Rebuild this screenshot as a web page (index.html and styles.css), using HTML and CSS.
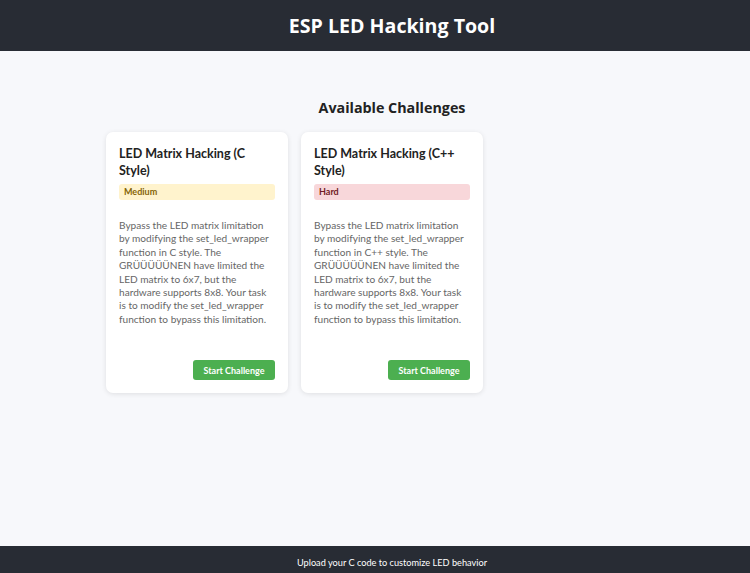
FILE: index.html
```html
<!DOCTYPE html>
<html>
<head>
<meta charset="utf-8">
<link rel="stylesheet" href="styles.css">
</head>
<body>
<div class="page">
  <header class="header">
    <h1 class="title">ESP LED Hacking Tool</h1>
  </header>
  <main class="main">
    <h2 class="section-title">Available Challenges</h2>
    <div class="grid">
      <div class="card">
        <h3 class="card-title">LED Matrix Hacking (C Style)</h3>
        <div class="badge badge-medium">Medium</div>
        <p class="desc">Bypass the LED matrix limitation by modifying the set_led_wrapper function in C style. The GRÜÜÜÜÜNEN have limited the LED matrix to 6x7, but the hardware supports 8x8. Your task is to modify the set_led_wrapper function to bypass this limitation.</p>
        <div class="actions"><button class="btn">Start Challenge</button></div>
      </div>
      <div class="card">
        <h3 class="card-title">LED Matrix Hacking (C++ Style)</h3>
        <div class="badge badge-hard">Hard</div>
        <p class="desc">Bypass the LED matrix limitation by modifying the set_led_wrapper function in C++ style. The GRÜÜÜÜÜNEN have limited the LED matrix to 6x7, but the hardware supports 8x8. Your task is to modify the set_led_wrapper function to bypass this limitation.</p>
        <div class="actions"><button class="btn">Start Challenge</button></div>
      </div>
    </div>
  </main>
  <footer class="footer">Upload your C code to customize LED behavior</footer>
</div>
</body>
</html>
```
FILE: styles.css
```css
html, body {
  margin: 0;
  padding: 0;
}
body {
  font-family: "Open Sans", "Noto Sans", sans-serif;
  background: #f7f8fb;
  color: #222;
}
.page {
  display: flex;
  flex-direction: column;
  height: 573px;
}
.header {
  background: #282c34;
  height: 51px;
  display: flex;
  align-items: center;
  justify-content: center;
  padding-left: 34px;
}
.title {
  margin: 0;
  color: #fff;
  font-size: 19.6px;
  font-weight: 700;
}
.main {
  flex: 1;
  padding: 46px 0 0 106px;
}
.section-title {
  width: 572px;
  margin: 0 0 13px 0;
  text-align: center;
  font-size: 14.3px;
  font-weight: 700;
  color: #222;
  line-height: 22px;
}
.grid {
  width: 572px;
  display: grid;
  grid-template-columns: repeat(3, 182px);
  column-gap: 13px;
}
.card {
  background: #fff;
  border-radius: 7px;
  box-shadow: 0 1px 5px rgba(0,0,0,0.1);
  padding: 14px 13px 13px 13px;
  height: 261px;
  box-sizing: border-box;
  display: flex;
  flex-direction: column;
  font-family: "Lato", "Open Sans", sans-serif;
}
.card-title {
  margin: 0 0 5px 0;
  font-size: 12.5px;
  line-height: 16.5px;
  font-weight: 700;
  color: #222;
}
.badge {
  height: 16px;
  line-height: 16px;
  font-size: 9px;
  font-weight: 700;
  padding: 0 5px;
  border-radius: 3px;
}
.badge-medium {
  background: #fff3cd;
  color: #856404;
}
.badge-hard {
  background: #f8d7da;
  color: #721c24;
}
.desc {
  margin: 19px 0 0 0;
  font-size: 10.1px;
  line-height: 13.4px;
  color: #666;
  flex: 1;
}
.actions {
  display: flex;
  justify-content: flex-end;
}
.btn {
  background: #4caf50;
  color: #fff;
  border: none;
  border-radius: 3px;
  font-family: inherit;
  font-size: 9px;
  font-weight: 700;
  height: 20px;
  width: 82px;
  padding: 0;
}
.footer {
  background: #282c34;
  color: #fff;
  height: 27px;
  box-sizing: border-box;
  padding-top: 7px;
  line-height: 20px;
  font-family: "Lato", "Open Sans", sans-serif;
  font-size: 9.2px;
  text-align: center;
  padding-left: 34px;
}
```
